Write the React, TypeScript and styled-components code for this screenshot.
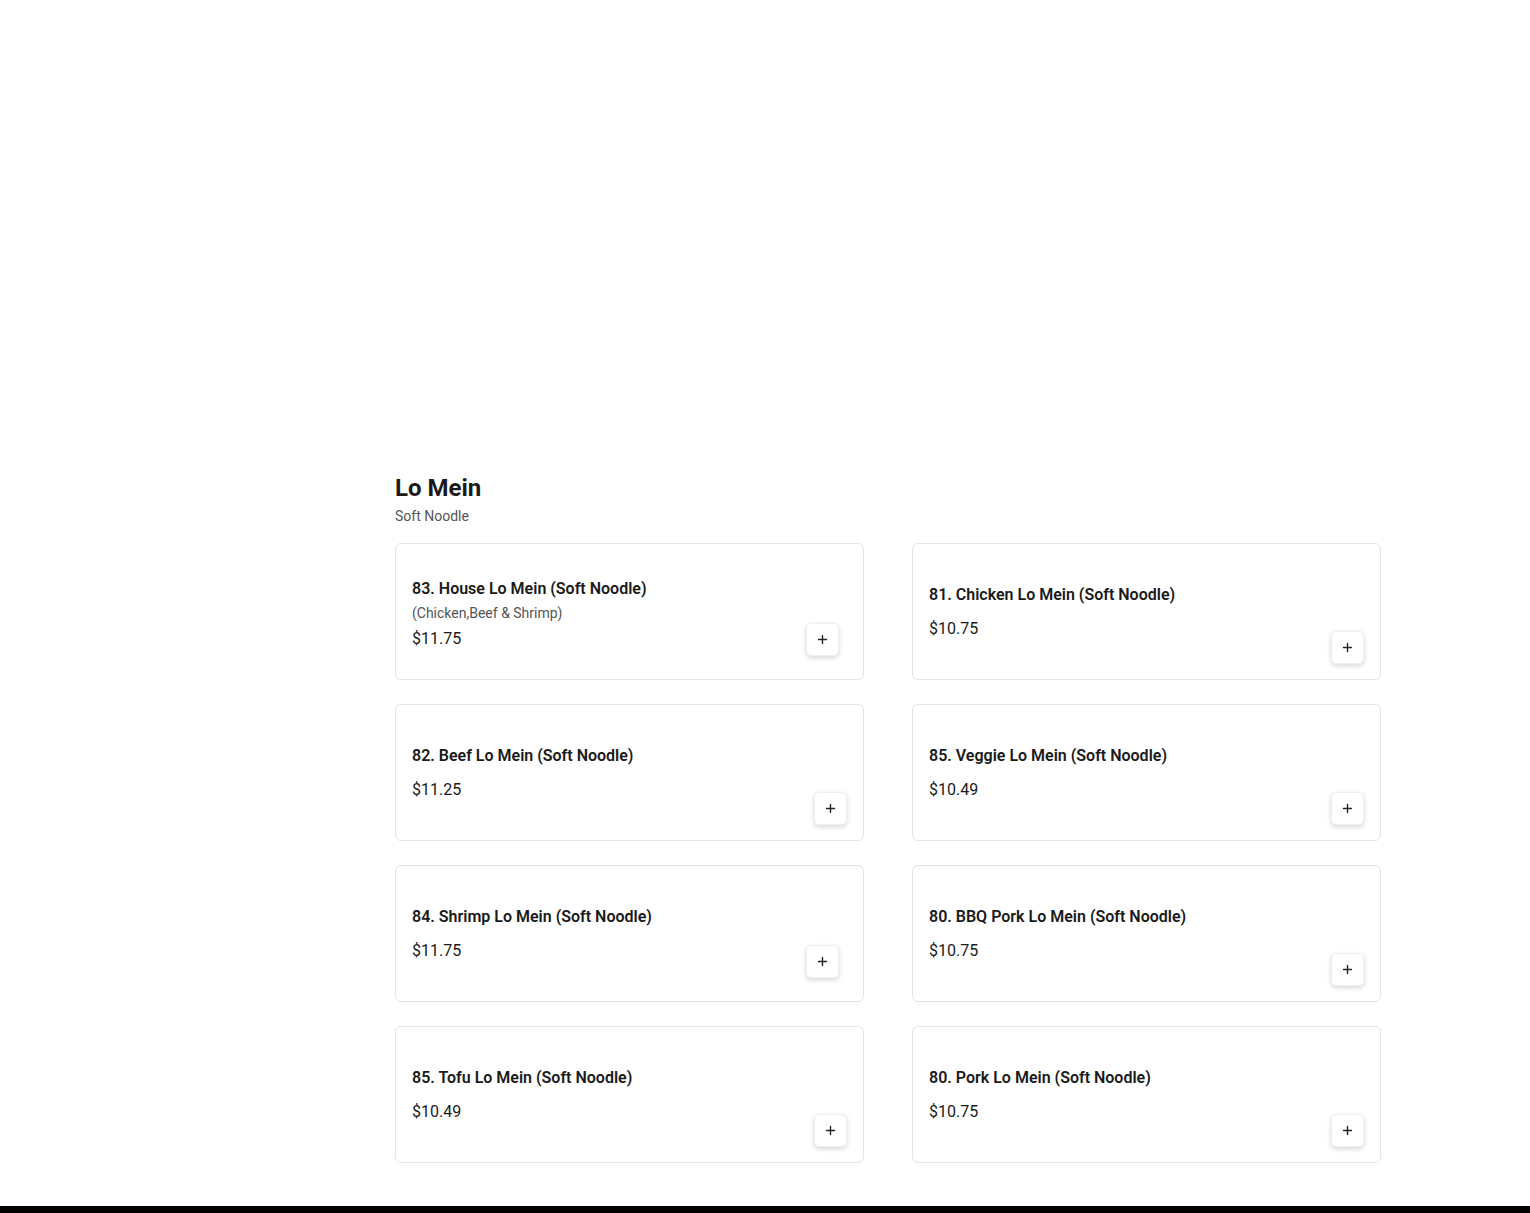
import React from "react";
import styled, { createGlobalStyle } from "styled-components";

const Global = createGlobalStyle`
  html, body { margin: 0; padding: 0; background: #fff; }
  body { font-family: Roboto, "Liberation Sans", Arial, sans-serif; color: #1a1a1a; }
  * { box-sizing: border-box; }
`;

const Page = styled.div`
  display: flex;
  flex-direction: column;
  min-height: 100vh;
`;

const Hero = styled.div`
  height: 472px;
`;

const Section = styled.section`
  margin-left: 395px;
  width: 986px;
  display: flex;
  flex-direction: column;
`;

const Heading = styled.h2`
  margin: 0;
  font-size: 24px;
  line-height: 32px;
  font-weight: 700;
  color: #1a1a1a;
`;

const Subtitle = styled.p`
  margin: 2px 0 0;
  font-size: 14px;
  line-height: 20px;
  color: #555;
`;

const Grid = styled.div`
  margin-top: 17px;
  display: grid;
  grid-template-columns: 469px 469px;
  column-gap: 48px;
  row-gap: 24px;
`;

const Card = styled.div`
  height: 137px;
  border: 1px solid #e4e4e4;
  border-radius: 6px;
  background: #fff;
  padding: 16px 16px 15px;
  display: flex;
  flex-direction: row;
`;

const Info = styled.div<{ $hasDesc: boolean }>`
  flex: 1;
  align-self: center;
  display: flex;
  flex-direction: column;
  padding-top: ${(p) => (p.$hasDesc ? "3px" : "0")};
  padding-bottom: ${(p) => (p.$hasDesc ? "0" : "1px")};
`;

const Title = styled.div`
  font-size: 16px;
  line-height: 24px;
  font-weight: 600;
  color: #1a1a1a;
`;

const Desc = styled.div`
  margin-top: 2px;
  font-size: 14px;
  line-height: 20px;
  color: #555;
`;

const Price = styled.div<{ $tight: boolean }>`
  margin-top: ${(p) => (p.$tight ? "4px" : "10px")};
  font-size: 16px;
  line-height: 24px;
  color: #1a1a1a;
`;

const AddButton = styled.button<{ $raised: boolean }>`
  align-self: flex-end;
  width: 33px;
  height: 33px;
  margin: ${(p) => (p.$raised ? "0 8px 8px 0" : "0")};
  padding: 0;
  border: 1px solid #f0f0f0;
  border-radius: 5px;
  background: #fff;
  box-shadow: 0 2px 5px rgba(0, 0, 0, 0.16);
  display: flex;
  align-items: center;
  justify-content: center;
  cursor: pointer;
`;

const Footer = styled.footer`
  margin-top: 43px;
  height: 60px;
  background: #000;
`;

const PlusIcon = () => (
  <svg width="11" height="11" viewBox="0 0 11 11" fill="none">
    <path d="M5.5 1.5v8M1.5 5.5h8" stroke="#222" strokeWidth="1.4" strokeLinecap="round" />
  </svg>
);

type Item = { name: string; desc?: string; price: string; raised: boolean };

const items: Item[] = [
  { name: "83. House Lo Mein (Soft Noodle)", desc: "(Chicken,Beef & Shrimp)", price: "$11.75", raised: true },
  { name: "81. Chicken Lo Mein (Soft Noodle)", price: "$10.75", raised: false },
  { name: "82. Beef Lo Mein (Soft Noodle)", price: "$11.25", raised: false },
  { name: "85. Veggie Lo Mein (Soft Noodle)", price: "$10.49", raised: false },
  { name: "84. Shrimp Lo Mein (Soft Noodle)", price: "$11.75", raised: true },
  { name: "80. BBQ Pork Lo Mein (Soft Noodle)", price: "$10.75", raised: false },
  { name: "85. Tofu Lo Mein (Soft Noodle)", price: "$10.49", raised: false },
  { name: "80. Pork Lo Mein (Soft Noodle)", price: "$10.75", raised: false },
];

export default function App() {
  return (
    <Page>
      <Global />
      <Hero />
      <Section>
        <Heading>Lo Mein</Heading>
        <Subtitle>Soft Noodle</Subtitle>
        <Grid>
          {items.map((it) => (
            <Card key={it.name}>
              <Info $hasDesc={!!it.desc}>
                <Title>{it.name}</Title>
                {it.desc && <Desc>{it.desc}</Desc>}
                <Price $tight={!!it.desc}>{it.price}</Price>
              </Info>
              <AddButton $raised={it.raised} aria-label="Add">
                <PlusIcon />
              </AddButton>
            </Card>
          ))}
        </Grid>
      </Section>
      <Footer />
    </Page>
  );
}
